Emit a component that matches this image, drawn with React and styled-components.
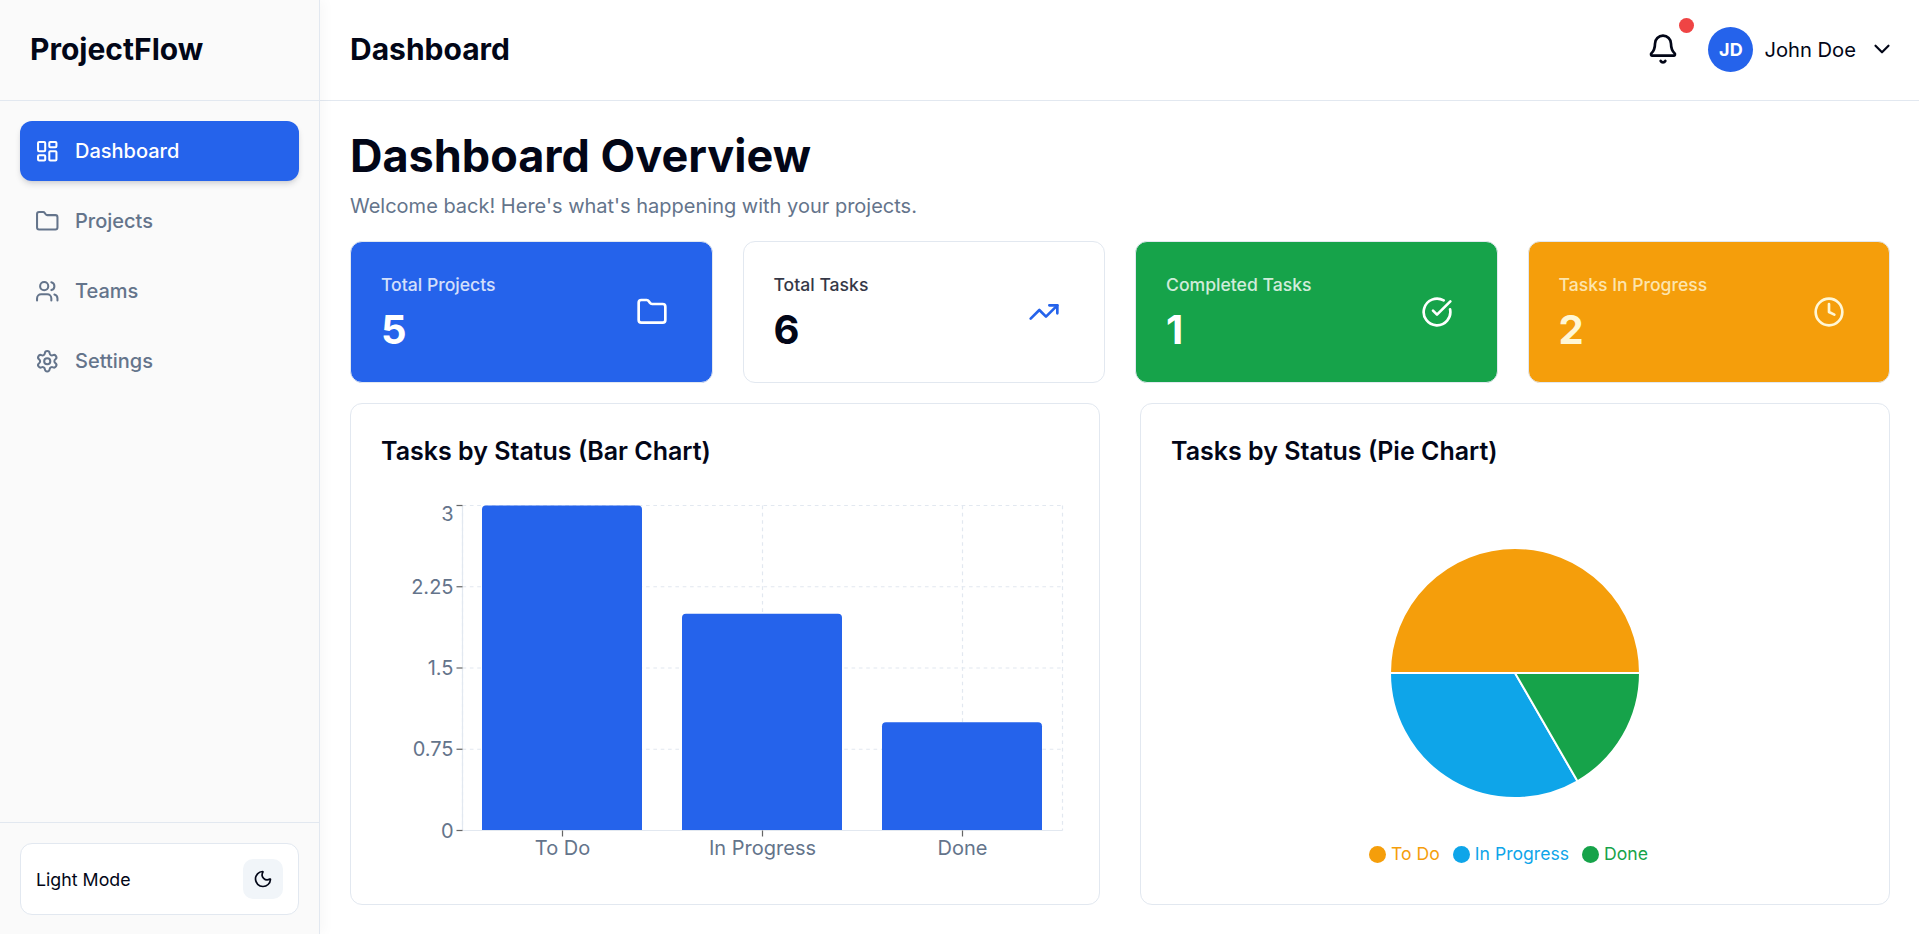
import React from 'react'
import styled, { createGlobalStyle } from 'styled-components'
import {
  LayoutDashboard,
  Folder,
  Users,
  Settings,
  TrendingUp,
  CircleCheckBig,
  Clock,
  Bell,
  ChevronDown,
  Moon,
} from 'lucide-react'

const GlobalStyle = createGlobalStyle`
  * { box-sizing: border-box; }
  html, body { margin: 0; padding: 0; height: 100%; }
  body {
    font-family: Inter, "Liberation Sans", sans-serif;
    color: #020617;
    background: #fff;
    overflow: hidden;
  }
`

const Shell = styled.div`
  display: grid;
  grid-template-columns: 320px 1fr;
  height: 934px;
`

const Sidebar = styled.aside`
  display: flex;
  flex-direction: column;
  background: #fafafa;
  border-right: 1px solid #e2e8f0;
  box-shadow: 4px 0 12px rgba(15, 23, 42, 0.03);
  z-index: 1;
`

const Logo = styled.div`
  height: 101px;
  display: flex;
  align-items: center;
  padding: 0 0 2px 30px;
  font-size: 30px;
  font-weight: 700;
  border-bottom: 1px solid #e2e8f0;
`

const Nav = styled.nav`
  flex: 1;
  display: flex;
  flex-direction: column;
  gap: 10px;
  padding: 20px;
`

const NavItem = styled.a`
  height: 60px;
  display: flex;
  align-items: center;
  gap: 15.5px;
  padding-left: 15px;
  border-radius: 12px;
  font-size: 20px;
  font-weight: 500;
  color: ${p => (p.$active ? '#fff' : '#64748b')};
  background: ${p => (p.$active ? '#2563eb' : 'transparent')};
  box-shadow: ${p => (p.$active ? '0 4px 6px -1px rgba(15, 23, 42, 0.15), 0 2px 4px -2px rgba(15, 23, 42, 0.1)' : 'none')};
`

const SideFoot = styled.div`
  padding: 20px 20px 19px;
  border-top: 1px solid #e2e8f0;
`

const ThemeCard = styled.div`
  height: 72px;
  display: flex;
  align-items: center;
  justify-content: space-between;
  padding: 0 15px;
  background: #fff;
  border: 1px solid #e2e8f0;
  border-radius: 12px;
  font-size: 17.8px;
  font-weight: 400;
`

const ThemeButton = styled.button`
  width: 40px;
  height: 40px;
  display: grid;
  place-items: center;
  padding: 0;
  border: 0;
  border-radius: 10px;
  background: #f1f5f9;
  color: #020617;
`

const Main = styled.div`
  display: flex;
  flex-direction: column;
  min-width: 0;
`

const Header = styled.header`
  height: 101px;
  display: flex;
  align-items: center;
  justify-content: space-between;
  padding: 0 24px 2px 30px;
  border-bottom: 1px solid #e2e8f0;
`

const HeaderTitle = styled.h2`
  margin: 0;
  font-size: 30px;
  font-weight: 700;
`

const HeaderRight = styled.div`
  display: flex;
  align-items: center;
`

const BellWrap = styled.div`
  position: relative;
  display: flex;
  margin-right: 29px;
`

const BellDot = styled.span`
  position: absolute;
  top: -15px;
  right: -15px;
  width: 15px;
  height: 15px;
  border-radius: 50%;
  background: #ef4444;
`

const Avatar = styled.div`
  width: 45px;
  height: 45px;
  display: grid;
  place-items: center;
  border-radius: 50%;
  background: #2563eb;
  color: #fff;
  font-size: 18px;
  font-weight: 700;
`

const UserName = styled.span`
  margin: 0 13px 0 11px;
  font-size: 20.2px;
  font-weight: 400;
`

const Content = styled.main`
  padding: 28px 29px 0 30px;
`

const PageTitle = styled.h1`
  margin: 0;
  font-size: 45px;
  line-height: 54px;
  font-weight: 700;
`

const Subtitle = styled.p`
  margin: 10px 0 0;
  font-size: 20px;
  line-height: 26px;
  color: #64748b;
`

const StatGrid = styled.section`
  display: grid;
  grid-template-columns: repeat(4, 1fr);
  gap: 30px;
  margin-top: 22px;
`

const StatCard = styled.div`
  height: 142px;
  display: flex;
  align-items: center;
  justify-content: space-between;
  padding: 30px;
  border: 1px solid #e2e8f0;
  border-radius: 12px;
  background: ${p => p.$bg};
  color: ${p => p.$fg};
`

const StatText = styled.div`
  padding-top: 2px;
`

const StatLabel = styled.div`
  font-size: 17.6px;
  line-height: 24px;
  font-weight: 500;
  opacity: 0.8;
`

const StatValue = styled.div`
  margin-top: 9px;
  font-size: 40px;
  line-height: 48px;
  font-weight: 700;
`

const StatIcon = styled.div`
  width: 60px;
  height: 60px;
  display: grid;
  place-items: center;
  color: ${p => p.$color || 'inherit'};
`

const ChartGrid = styled.section`
  display: grid;
  grid-template-columns: 1fr 1fr;
  gap: 40px;
  margin-top: 20px;
`

const ChartCard = styled.div`
  height: 502px;
  padding: 30px;
  border: 1px solid #e2e8f0;
  border-radius: 12px;
  background: #fff;
`

const ChartTitle = styled.h3`
  margin: 0 0 27px;
  font-size: 25px;
  line-height: 34px;
  font-weight: 600;
`

const ChartSvg = styled.svg`
  display: block;
  width: 100%;
`

const Legend = styled.ul`
  margin: 0;
  padding: 0;
  list-style: none;
  text-align: center;
  font-size: 17.6px;
  line-height: 24px;
`

const LegendItem = styled.li`
  display: inline-flex;
  align-items: center;
  gap: 5px;
  margin-right: 13px;
  color: ${p => p.$color};
`

const LegendDot = styled.span`
  width: 17px;
  height: 17px;
  border-radius: 50%;
  background: ${p => p.$color};
`

const navItems = [
  { label: 'Dashboard', Icon: LayoutDashboard, active: true },
  { label: 'Projects', Icon: Folder },
  { label: 'Teams', Icon: Users },
  { label: 'Settings', Icon: Settings },
]

const stats = [
  { label: 'Total Projects', value: 5, Icon: Folder, bg: '#2563eb', fg: '#fff' },
  { label: 'Total Tasks', value: 6, Icon: TrendingUp, bg: '#fff', fg: '#020617', iconColor: '#2563eb' },
  { label: 'Completed Tasks', value: 1, Icon: CircleCheckBig, bg: '#16a34a', fg: '#fff' },
  { label: 'Tasks In Progress', value: 2, Icon: Clock, bg: '#f59e0b', fg: '#fff7d6' },
]

const slices = [
  { label: 'To Do', value: 3, color: '#f59e0b' },
  { label: 'In Progress', value: 2, color: '#0ea5e9' },
  { label: 'Done', value: 1, color: '#16a34a' },
]

const PLOT = { left: 81.5, right: 681.5, top: 10.5, bottom: 335.5 }

const BarChart = () => {
  const { left, right, top, bottom } = PLOT
  const band = (right - left) / 3
  const yTicks = ['0', '0.75', '1.5', '2.25', '3']
  const yAt = i => bottom - (i * (bottom - top)) / 4
  const grid = { stroke: '#e2e8f0', strokeWidth: 1.22, strokeDasharray: '3.67 3.67', fill: 'none' }
  const axis = { stroke: '#e2e8f0', strokeWidth: 1.22 }
  const tick = { stroke: '#666', strokeWidth: 1.22 }
  return (
    <ChartSvg viewBox="0 0 688 380" height="380">
      {yTicks.map((t, i) => (
        <line key={t} x1={left} x2={right} y1={yAt(i)} y2={yAt(i)} {...grid} />
      ))}
      {[0, 1.5, 2.5, 3].map(n => (
        <line key={n} x1={left + n * band} x2={left + n * band} y1={top} y2={bottom} {...grid} />
      ))}
      {slices.map((s, i) => {
        const h = (s.value / 3) * (bottom - top)
        const x = 101 + i * 200
        const w = 160
        const y = bottom - h
        return (
          <path
            key={s.label}
            d={`M${x} ${bottom}V${y + 4}a4 4 0 0 1 4 -4H${x + w - 4}a4 4 0 0 1 4 4V${bottom}Z`}
            fill="#2563eb"
          />
        )
      })}
      <line x1={left} x2={left} y1={top} y2={bottom} {...axis} />
      <line x1={left} x2={right} y1={bottom} y2={bottom} {...axis} />
      {yTicks.map((t, i) => (
        <g key={t}>
          <line x1={left - 6} x2={left} y1={yAt(i)} y2={yAt(i)} {...tick} />
          <text
            x={left - 9}
            y={i === 4 ? yAt(i) + 8 : yAt(i)}
            dy="0.355em"
            textAnchor="end"
            fontSize="20"
            fill="#64748b"
          >
            {t}
          </text>
        </g>
      ))}
      {slices.map((s, i) => {
        const cx = left + (i + 0.5) * band
        return (
          <g key={s.label}>
            <line x1={cx} x2={cx} y1={bottom} y2={bottom + 6} {...tick} />
            <text x={cx} y={bottom + 24} textAnchor="middle" fontSize="20" fill="#64748b">
              {s.label}
            </text>
          </g>
        )
      })}
    </ChartSvg>
  )
}

const PieChart = () => {
  const cx = 344
  const cy = 178
  const r = 125
  const point = deg => {
    const a = (deg * Math.PI) / 180
    return `${cx + r * Math.cos(a)} ${cy - r * Math.sin(a)}`
  }
  let start = 0
  return (
    <ChartSvg viewBox="0 0 688 347" height="347">
      {slices.map(s => {
        const sweep = (s.value / 6) * 360
        const from = start
        start += sweep
        return (
          <path
            key={s.label}
            d={`M${cx} ${cy}L${point(from)}A${r} ${r} 0 0 0 ${point(from + sweep)}Z`}
            fill={s.color}
            stroke="#fff"
            strokeWidth="2"
          />
        )
      })}
    </ChartSvg>
  )
}

const App = () => (
  <Shell>
    <GlobalStyle />
    <Sidebar>
      <Logo>ProjectFlow</Logo>
      <Nav>
        {navItems.map(({ label, Icon, active }) => (
          <NavItem key={label} $active={active}>
            <Icon size={24.5} />
            {label}
          </NavItem>
        ))}
      </Nav>
      <SideFoot>
        <ThemeCard>
          Light Mode
          <ThemeButton>
            <Moon size={20} />
          </ThemeButton>
        </ThemeCard>
      </SideFoot>
    </Sidebar>
    <Main>
      <Header>
        <HeaderTitle>Dashboard</HeaderTitle>
        <HeaderRight>
          <BellWrap>
            <Bell size={32} />
            <BellDot />
          </BellWrap>
          <Avatar>JD</Avatar>
          <UserName>John Doe</UserName>
          <ChevronDown size={26} />
        </HeaderRight>
      </Header>
      <Content>
        <PageTitle>Dashboard Overview</PageTitle>
        <Subtitle>Welcome back! Here's what's happening with your projects.</Subtitle>
        <StatGrid>
          {stats.map(({ label, value, Icon, bg, fg, iconColor }) => (
            <StatCard key={label} $bg={bg} $fg={fg}>
              <StatText>
                <StatLabel>{label}</StatLabel>
                <StatValue>{value}</StatValue>
              </StatText>
              <StatIcon $color={iconColor}>
                <Icon size={32} />
              </StatIcon>
            </StatCard>
          ))}
        </StatGrid>
        <ChartGrid>
          <ChartCard>
            <ChartTitle>Tasks by Status (Bar Chart)</ChartTitle>
            <BarChart />
          </ChartCard>
          <ChartCard>
            <ChartTitle>Tasks by Status (Pie Chart)</ChartTitle>
            <PieChart />
            <Legend>
              {slices.map(s => (
                <LegendItem key={s.label} $color={s.color}>
                  <LegendDot $color={s.color} />
                  {s.label}
                </LegendItem>
              ))}
            </Legend>
          </ChartCard>
        </ChartGrid>
      </Content>
    </Main>
  </Shell>
)

export default App
